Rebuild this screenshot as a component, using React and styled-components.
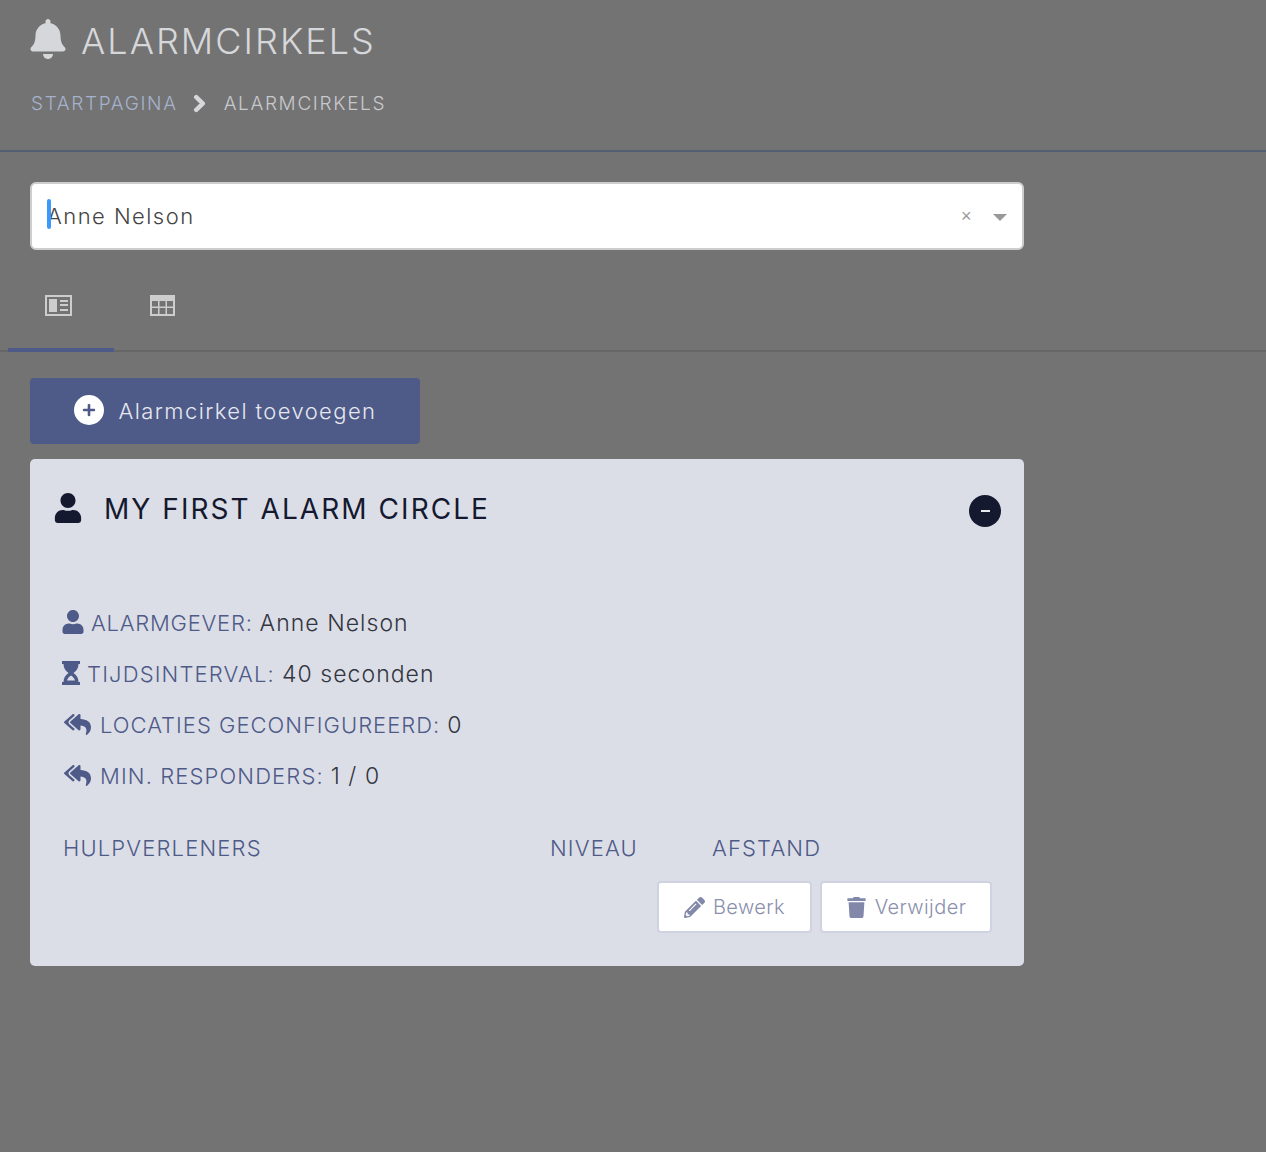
import React from 'react';
import styled, { createGlobalStyle } from 'styled-components';
import { FaBell, FaChevronRight, FaUser, FaReplyAll, FaPencilAlt, FaTrash, FaPlus } from 'react-icons/fa';

const Global = createGlobalStyle`
  html, body { margin: 0; padding: 0; background: #737373; }
  body { font-family: Inter, "Liberation Sans", sans-serif; font-weight: 300; min-height: 1152px; }
`;

const Page = styled.div`
  width: 1266px;
  height: 1152px;
  overflow: hidden;
  background: #737373;
`;
const Header = styled.header`
  height: 150px;
  border-bottom: 2px solid #525f70;
  padding: 0 30px;
  box-sizing: content-box;
`;
const TitleRow = styled.div`
  display: flex;
  align-items: center;
  gap: 13px;
  height: 82px;
  color: #d6d7da;
  svg { font-size: 40px; margin: -4px 0 0 -2px; }
`;
const Title = styled.h1`
  margin: 0;
  font-size: 36px;
  font-weight: 300;
  letter-spacing: 2.05px;
`;
const Breadcrumb = styled.nav`
  display: flex;
  align-items: center;
  height: 42px;
  padding-left: 1px;
  font-size: 19px;
  letter-spacing: 1.65px;
  color: #c8c9cd;
  svg {
    font-size: 19px;
    margin: 0 15px 0 12px;
    color: #d6d7da;
    stroke: currentColor;
    stroke-width: 40;
  }
`;
const Crumb = styled.span`
  color: ${p => (p.$link ? '#a5b2cc' : '#c8c9cd')};
`;
const Content = styled.main`
  padding: 30px 0 0;
`;
const SelectBox = styled.div`
  position: relative;
  margin-left: 30px;
  width: 994px;
  height: 68px;
  box-sizing: border-box;
  background: #fff;
  border: 2px solid #cdcdcd;
  border-radius: 6px;
  display: flex;
  align-items: center;
  padding: 0 15px 0 15px;
  color: #444;
  font-size: 22px;
  letter-spacing: 1.45px;
`;
const Caret = styled.span`
  position: absolute;
  left: 15px;
  top: 15px;
  width: 4px;
  height: 30px;
  border-radius: 2px;
  background: #3b99fc;
`;
const SelectValue = styled.span`
  flex: 1;
`;
const Clear = styled.span`
  color: #999;
  font-size: 18px;
  font-family: "Liberation Sans", sans-serif;
  margin-right: 20px;
`;
const Arrow = styled.span`
  width: 0;
  height: 0;
  border-left: 7px solid transparent;
  border-right: 7px solid transparent;
  border-top: 7px solid #999;
  margin-top: 2px;
`;
const Tabs = styled.div`
  display: flex;
  margin-top: 30px;
  height: 70px;
  border-bottom: 2px solid #666;
  padding-left: 8px;
`;
const Tab = styled.div`
  width: 106px;
  height: 72px;
  box-sizing: border-box;
  display: flex;
  justify-content: center;
  padding: 15px ${p => p.$shift}px 0 0;
  color: #cdcdcd;
  border-bottom: 4px solid ${p => (p.$active ? '#4e5a88' : 'transparent')};
  svg { display: block; }
`;
const AddButton = styled.button`
  display: flex;
  align-items: center;
  justify-content: center;
  gap: 15px;
  margin: 26px 0 0 30px;
  width: 390px;
  height: 66px;
  border: 0;
  border-radius: 4px;
  background: #4e5a88;
  color: #e6e8ef;
  font-family: inherit;
  font-weight: 300;
  font-size: 22px;
  letter-spacing: 1.4px;
`;
const PlusCircle = styled.span`
  width: 30px;
  height: 30px;
  border-radius: 50%;
  background: #fff;
  color: #4e5a88;
  display: flex;
  align-items: center;
  justify-content: center;
  font-size: 14px;
  margin-top: -3px;
`;
const Card = styled.section`
  margin: 15px 0 0 30px;
  width: 994px;
  height: 507px;
  box-sizing: border-box;
  background: #dcdee7;
  border-radius: 5px;
  padding: 32px 23px 0 23px;
  display: flex;
  flex-direction: column;
`;
const CardHead = styled.div`
  display: flex;
  align-items: center;
  height: 36px;
  color: #14192f;
  svg { font-size: 30px; margin-right: 21px; margin-top: -2px; }
`;
const CardTitle = styled.h2`
  flex: 1;
  margin: 0;
  font-size: 28px;
  font-weight: 400;
  letter-spacing: 2.05px;
`;
const Collapse = styled.span`
  width: 32px;
  height: 32px;
  border-radius: 50%;
  background: #14192f;
  display: flex;
  align-items: center;
  justify-content: center;
  margin-top: 3px;
  &::after { content: ''; width: 9px; height: 2px; background: #e8e9ef; }
`;
const Facts = styled.div`
  margin: 81px 0 0 8px;
  display: flex;
  flex-direction: column;
  gap: 21px;
`;
const Fact = styled.div`
  display: flex;
  align-items: center;
  height: 30px;
  font-size: 23px;
  letter-spacing: 1.05px;
  color: #33363f;
  svg { color: #4e5a88; flex: none; margin-left: ${p => p.$indent || 0}px; margin-top: -2px; }
`;
const Label = styled.span`
  color: #4e5a88;
  font-size: 22px;
  letter-spacing: ${p => p.$ls || 1}px;
  margin: 0 7px 0 ${p => p.$gap}px;
`;
const TableHead = styled.div`
  display: grid;
  grid-template-columns: 487px 162px auto;
  margin: 42px 0 0 10px;
  font-size: 22px;
  letter-spacing: 1.15px;
  color: #4e5a88;
  height: 30px;
  align-items: center;
`;
const Actions = styled.div`
  display: flex;
  justify-content: flex-end;
  gap: 8px;
  margin: 18px 9px 0 0;
`;
const ActionButton = styled.button`
  display: flex;
  align-items: center;
  justify-content: center;
  gap: 8px;
  width: ${p => p.$w}px;
  height: 52px;
  box-sizing: border-box;
  background: #fff;
  border: 2px solid #cfd2e1;
  border-radius: 4px;
  color: #8a90ad;
  font-family: inherit;
  font-weight: 300;
  font-size: 20px;
  letter-spacing: 0.4px;
  svg { font-size: 21px; color: #8288aa; }
`;

const NewsIcon = () => (
  <svg width="27" height="21" viewBox="0 0 27 21" fill="currentColor">
    <path fillRule="evenodd" d="M0 0h27v21H0zM2 2v17h23V2z" />
    <path d="M4 4h8v13H4zM15 5h8v2h-8zM15 9h8v2h-8zM15 14h8v2h-8z" />
  </svg>
);

const GridIcon = () => (
  <svg width="25" height="21" viewBox="0 0 25 21" fill="currentColor">
    <path
      fillRule="evenodd"
      d="M0 0h25v21H0zM2 6v5.500h6V6zM9.500 6v5.500h6V6zM17 6v5.500h6V6zM2 13v6h6v-6zM9.500 13v6h6v-6zM17 13v6h6v-6z"
    />
  </svg>
);

const HourglassIcon = () => (
  <svg width="18" height="24" viewBox="0 0 18 24" fill="currentColor">
    <path
      fillRule="evenodd"
      d="M0 0h18v3h-1.500c0 4-2 7-5 9 3 2 5 5 5 9H18v3H0v-3h1.500c0-4 2-7 5-9-3-2-5-5-5-9H0zM9 14.500c-2 1.300-3.400 3-4 5h8c-.6-2-2-3.700-4-5z"
    />
  </svg>
);

export default function App() {
  return (
    <Page>
      <Global />
      <Header>
        <TitleRow>
          <FaBell />
          <Title>ALARMCIRKELS</Title>
        </TitleRow>
        <Breadcrumb>
          <Crumb $link>STARTPAGINA</Crumb>
          <FaChevronRight />
          <Crumb>ALARMCIRKELS</Crumb>
        </Breadcrumb>
      </Header>
      <Content>
        <SelectBox>
          <Caret />
          <SelectValue>Anne Nelson</SelectValue>
          <Clear>×</Clear>
          <Arrow />
        </SelectBox>
        <Tabs>
          <Tab $active $shift={5}><NewsIcon /></Tab>
          <Tab $shift={9}><GridIcon /></Tab>
        </Tabs>
        <AddButton>
          <PlusCircle><FaPlus /></PlusCircle>
          Alarmcirkel toevoegen
        </AddButton>
        <Card>
          <CardHead>
            <FaUser />
            <CardTitle>MY FIRST ALARM CIRCLE</CardTitle>
            <Collapse />
          </CardHead>
          <Facts>
            <Fact><FaUser size={24} /><Label $gap={6} $ls={0.75}>ALARMGEVER:</Label>Anne Nelson</Fact>
            <Fact $indent={1}><HourglassIcon /><Label $gap={7} $ls={1.15}>TIJDSINTERVAL:</Label>40 seconden</Fact>
            <Fact $indent={3}><FaReplyAll size={27} /><Label $gap={9}>LOCATIES GECONFIGUREERD:</Label>0</Fact>
            <Fact $indent={3}><FaReplyAll size={27} /><Label $gap={9} $ls={1.12}>MIN. RESPONDERS:</Label>1 / 0</Fact>
          </Facts>
          <TableHead>
            <span>HULPVERLENERS</span>
            <span>NIVEAU</span>
            <span>AFSTAND</span>
          </TableHead>
          <Actions>
            <ActionButton $w={155}><FaPencilAlt />Bewerk</ActionButton>
            <ActionButton $w={172}><FaTrash />Verwijder</ActionButton>
          </Actions>
        </Card>
      </Content>
    </Page>
  );
}
